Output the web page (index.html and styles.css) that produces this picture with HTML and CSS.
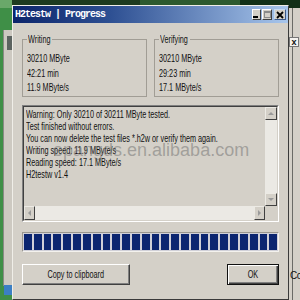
FILE: index.html
```html
<!DOCTYPE html>
<html lang="en">
<head>
    <meta charset="UTF-8">
    <title>H2testw | Progress</title>
    <link rel="stylesheet" href="styles.css">
</head>
<body>
    <div class="desktop">
        <div class="desk-top"></div>
        <div class="desk-left"><div class="desk-icon"></div></div>
        <div class="desk-sc"></div>
        <div class="desk-right">
            <div class="desk-pane">
                <div class="desk-close">x</div>
                <div class="desk-copy">Cop</div>
            </div>
        </div>

        <div class="window">
            <div class="titlebar">
                <span class="title">H2testw | Progress</span>
                <div class="caption">
                    <button class="cap-btn min">
                        <svg width="7" height="7" viewBox="0 0 7 7"><rect x="0" y="5" width="5" height="2" fill="#000"/></svg>
                    </button>
                    <button class="cap-btn max">
                        <svg width="7" height="7" viewBox="0 0 7 7"><rect x="0.5" y="0.5" width="6" height="6" fill="none" stroke="#8a8a8a"/><rect x="0" y="0" width="7" height="2" fill="#8a8a8a"/></svg>
                    </button>
                    <button class="cap-btn close">
                        <svg width="8" height="8" viewBox="0 0 8 8"><path d="M1 1 L7 7 M7 1 L1 7" stroke="#000" stroke-width="1.8"/></svg>
                    </button>
                </div>
            </div>

            <div class="content">
                <div class="groups">
                    <fieldset class="group">
                        <legend class="lg-writing"><span class="sx">Writing</span></legend>
                        <div class="vals sx">
                            <div class="val">30210 MByte</div>
                            <div class="val">42:21 min</div>
                            <div class="val">11.9 MByte/s</div>
                        </div>
                    </fieldset>
                    <fieldset class="group">
                        <legend class="lg-verifying"><span class="sx">Verifying</span></legend>
                        <div class="vals sx">
                            <div class="val">30210 MByte</div>
                            <div class="val">29:23 min</div>
                            <div class="val">17.1 MByte/s</div>
                        </div>
                    </fieldset>
                </div>

                <div class="log">
                    <div class="log-frame">
                        <div class="log-text">
                            <div class="log-lines sx">
                                <div>Warning: Only 30210 of 30211 MByte tested.</div>
                                <div>Test finished without errors.</div>
                                <div>You can now delete the test files *.h2w or verify them again.</div>
                                <div>Writing speed: 11.9 MByte/s</div>
                                <div>Reading speed: 17.1 MByte/s</div>
                                <div>H2testw v1.4</div>
                            </div>
                        </div>
                        <div class="vscroll">
                            <span class="sbtn up"></span>
                            <span class="track"></span>
                            <span class="sbtn down"></span>
                        </div>
                        <div class="hscroll">
                            <span class="sbtn left"></span>
                            <span class="track"></span>
                            <span class="sbtn right"></span>
                        </div>
                        <div class="corner"></div>
                    </div>
                </div>

                <div class="progress">
                    <span class="block"></span><span class="block"></span><span class="block"></span><span class="block"></span>
                    <span class="block"></span><span class="block"></span><span class="block"></span><span class="block"></span>
                    <span class="block"></span><span class="block"></span><span class="block"></span><span class="block"></span>
                    <span class="block"></span><span class="block"></span><span class="block"></span><span class="block"></span>
                    <span class="block"></span><span class="block"></span><span class="block"></span><span class="block"></span>
                    <span class="block"></span><span class="block"></span><span class="block"></span><span class="block"></span>
                    <span class="block"></span><span class="block"></span>
                </div>

                <div class="actions">
                    <button class="btn copy"><span class="btn-label">Copy to clipboard</span></button>
                    <button class="btn ok"><span class="btn-label">OK</span></button>
                </div>
            </div>
        </div>

        <div class="watermark">epangds.en.alibaba.com</div>
    </div>
</body>
</html>
```

FILE: styles.css
```css
* {
    box-sizing: border-box;
}
body {
    margin: 0;
    font-family: "Liberation Sans", Arial, sans-serif;
    font-size: 11px;
    color: #111;
}
/* the screenshot is squeezed sideways, so the text is too */
.sx {
    display: block;
    white-space: nowrap;
    transform: scaleX(0.66);
    transform-origin: 0 0;
}
.desktop {
    position: relative;
    width: 300px;
    height: 300px;
    overflow: hidden;
    background: #3f8f47;
}

/* things behind the dialog */
.desk-top {
    position: absolute;
    left: 0;
    top: 0;
    width: 300px;
    height: 8px;
    background: linear-gradient(to right, #6aa86a 0 12px, #1d3b20 12px 140px, #2d5a2f 140px 240px, #123018 240px);
}
.desk-left {
    position: absolute;
    left: 3px;
    top: 30px;
    width: 14px;
    height: 256px;
    background: #cdc9c1;
    border-left: 1px solid #8a8a84;
}
.desk-icon {
    margin: 6px 0 0 3px;
    width: 6px;
    height: 14px;
    background: #5c6360;
}
.desk-sc {
    position: absolute;
    left: 4px;
    top: 285px;
    width: 9px;
    height: 10px;
    background: #3b7fc4;
}
.desk-right {
    position: absolute;
    left: 282px;
    top: 8px;
    width: 20px;
    height: 292px;
    padding-left: 10px;
    background: #d4d0c8;
}
.desk-pane {
    position: relative;
    height: 100%;
    border-left: 1px solid #6a6a66;
}
.desk-close {
    position: absolute;
    left: -4px;
    top: 29px;
    width: 10px;
    height: 10px;
    font-size: 9px;
    line-height: 9px;
    text-align: center;
    font-weight: bold;
    background: #f4f2ee;
    border: 1px solid #777;
}
.desk-copy {
    position: absolute;
    left: -3px;
    top: 262px;
    font-size: 10px;
    letter-spacing: -0.5px;
}

/* dialog */
.window {
    position: absolute;
    left: 12px;
    top: 5px;
    width: 277px;
    height: 295px;
    background: #d4d0c8;
    border: 1px solid;
    border-color: #f0eee8 #3a3a3a #3a3a3a #f0eee8;
}
.titlebar {
    display: flex;
    align-items: center;
    height: 17px;
    padding: 0 2px;
    background: linear-gradient(to right, #0c256b, #2d4f92 35%, #a8c6ec);
}
.title {
    font-family: "Liberation Mono", monospace;
    font-weight: bold;
    font-size: 10px;
    letter-spacing: -1px;
    color: #fff;
    white-space: pre;
}
.caption {
    margin-left: auto;
    display: flex;
    gap: 1px;
}
.cap-btn {
    width: 9px;
    height: 11px;
    padding: 0;
    display: flex;
    align-items: center;
    justify-content: center;
    background: #d4d0c8;
    border: 1px solid;
    border-color: #fff #404040 #404040 #fff;
}
.cap-btn.max {
    width: 10px;
}
.cap-btn.close {
    width: 12px;
    margin-left: 1px;
    border-color: #c6dcf4 #3c5a8a #3c5a8a #c6dcf4;
}

.content {
    padding: 10px 9px 0;
}
.groups {
    display: grid;
    grid-template-columns: 1fr 1fr;
    gap: 7px;
}
.group {
    margin: 0;
    min-width: 0;
    padding: 6px 4px 1px;
    border: 1px solid #a19d95;
}
.group legend {
    padding: 0 1px;
    line-height: 12px;
}
.lg-writing {
    width: 25px;
}
.lg-verifying {
    width: 31px;
}
.val {
    line-height: 14.5px;
}

.log {
    margin-top: 8px;
    height: 117px;
    border: 1px solid;
    border-color: #808080 #fff #fff #808080;
}
.log-frame {
    height: 100%;
    display: grid;
    grid-template-columns: 1fr 12px;
    grid-template-rows: 1fr 14px;
    border: 1px solid;
    border-color: #404040 #d4d0c8 #d4d0c8 #404040;
}
.log-text {
    padding: 1.5px 2px;
    line-height: 12px;
    overflow: hidden;
}
.vscroll {
    display: flex;
    flex-direction: column;
}
.hscroll {
    display: flex;
}
.track {
    flex: 1;
    background: #ebe9e4;
}
.sbtn {
    flex: none;
    width: 12px;
    height: 13px;
    display: flex;
    align-items: center;
    justify-content: center;
    background: #d4d0c8;
    border: 1px solid;
    border-color: #eceae4 #404040 #404040 #eceae4;
}
.hscroll .sbtn {
    width: 11px;
    height: 14px;
}
.sbtn::before {
    content: "";
    border: 3px solid transparent;
}
.sbtn.up::before {
    border-bottom-color: #9a9a9a;
    border-top-width: 0;
}
.sbtn.down::before {
    border-top-color: #9a9a9a;
    border-bottom-width: 0;
}
.sbtn.left::before {
    border-right-color: #9a9a9a;
    border-left-width: 0;
}
.sbtn.right::before {
    border-left-color: #9a9a9a;
    border-right-width: 0;
}
.corner {
    background: #d4d0c8;
}

.progress {
    margin-top: 10px;
    height: 20px;
    display: flex;
    gap: 2px;
    padding: 1px;
    background: #d0d0d8;
    border: 1px solid;
    border-color: #9a978f #f4f2ee #f4f2ee #9a978f;
}
.block {
    flex: 1;
    background: #0b2570;
}

.actions {
    margin-top: 12px;
    display: flex;
    justify-content: space-between;
}
.btn {
    height: 21px;
    padding: 0;
    font: inherit;
    color: #111;
    background: #d4d0c8;
    border: 1px solid;
    border-color: #fff #404040 #404040 #fff;
    box-shadow: inset -1px -1px 0 #808080;
}
.btn-label {
    display: inline-block;
    white-space: nowrap;
    transform: scaleX(0.66);
}
.btn.copy {
    width: 108px;
}
.btn.ok {
    width: 52px;
    border-color: #111;
    box-shadow: inset 1px 1px 0 #fff, inset -1px -1px 0 #404040, inset -2px -2px 0 #808080;
}

.watermark {
    position: absolute;
    left: 53px;
    top: 140px;
    font-family: "Liberation Sans", Arial, sans-serif;
    font-size: 18px;
    color: rgba(110, 110, 110, 0.5);
    white-space: nowrap;
}
```
